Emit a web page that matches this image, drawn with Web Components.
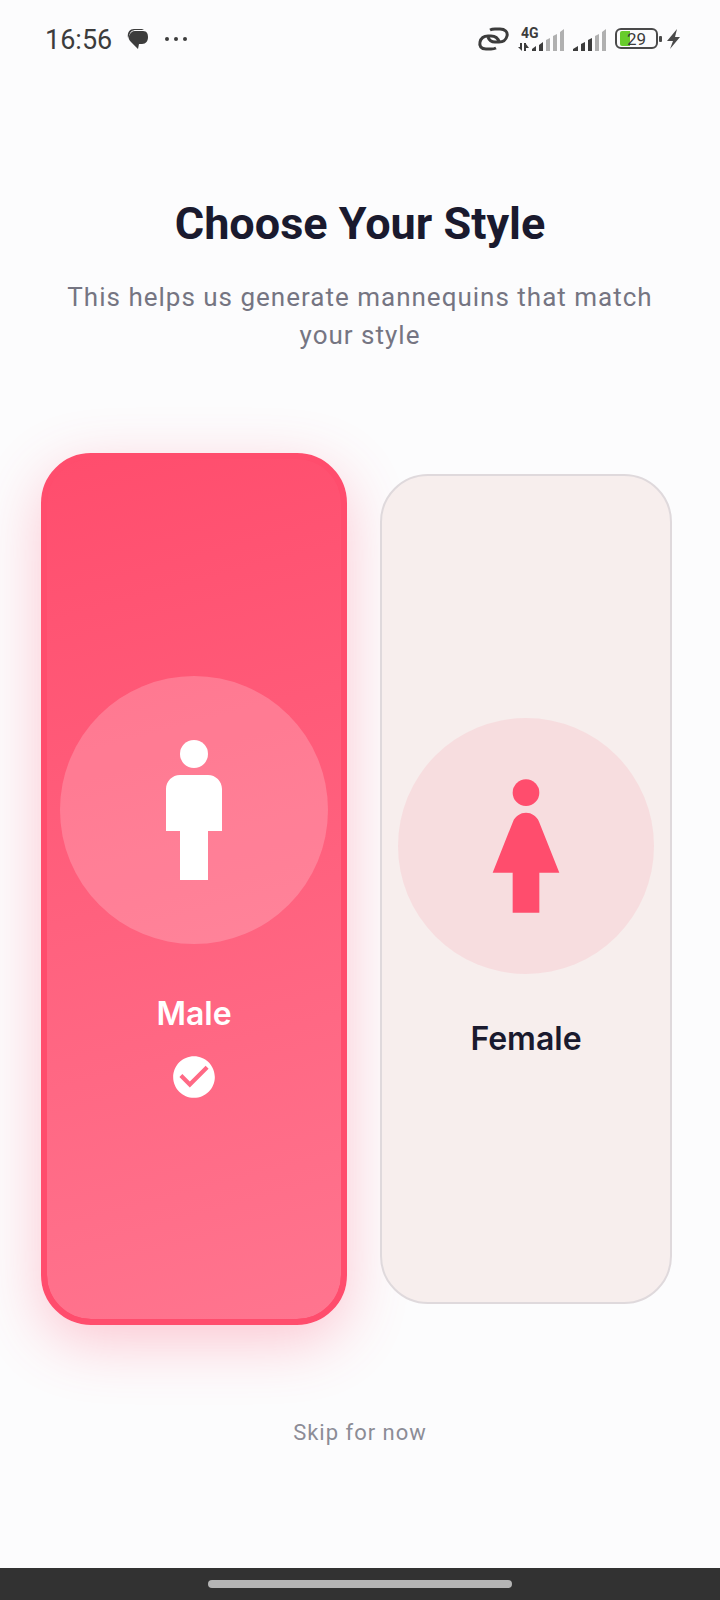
<!DOCTYPE html>
<html lang="en">
<head>
<meta charset="utf-8">
<meta name="viewport" content="width=device-width, initial-scale=1">
<title>Choose Your Style</title>
<style>
  html, body { margin: 0; }
  body { background: #fcfcfd; font-family: Roboto, sans-serif; color: #1a1a2e; }
</style>
</head>
<body>
<style-screen></style-screen>

<template id="t-status">
  <style>
    :host { display: flex; align-items: center; justify-content: space-between; height: 80px; padding: 0 38px 2px 45px; box-sizing: border-box; color: #3c3c3c; }
    div { display: flex; align-items: center; }
    svg { display: block; }
    .time { font-size: 27px; line-height: 34px; padding-top: 2px; }
    .left { gap: 15px; }
    .right { gap: 8px; }
    .power { gap: 3px; }
    .battery { position: relative; }
    .level { position: absolute; inset: 0 5px 0 0; text-align: center; font-size: 17px; line-height: 22px; }
  </style>
  <div class="left">
    <span class="time">16:56</span>
    <svg width="22" height="22" viewBox="0 0 22 22" fill="#3c3c3c" aria-hidden="true">
      <path d="M7 1h8l2 1H9C5 2 3 4 2 8L1 10C0 4 3 1 7 1z"/>
      <path d="M8 3h8c4 0 5 3 5 6 0 4-2 7-6 7h-3l-1 5-7-7C2 12 1 10 2 8 3 5 5 3 8 3z"/>
    </svg>
    <svg width="24" height="6" viewBox="0 0 24 6" fill="#3c3c3c" aria-hidden="true"><circle cx="3" cy="3" r="2"/><circle cx="12" cy="3" r="2"/><circle cx="21" cy="3" r="2"/></svg>
  </div>
  <div class="right">
    <svg width="32" height="26" viewBox="0 0 32 26" fill="none" stroke="#3c3c3c" stroke-width="3" aria-hidden="true">
      <path d="M19 22c-2 1-3 1-5 1H9c-5 0-7-3-6-7 1-4 4-6 8-6h3c4 0 7 2 8 6"/>
      <path d="M13 4c2-1 3-1 5-1h5c5 0 8 3 7 7-1 4-4 6-8 6h-4c-4 0-6-2-7-5"/>
    </svg>
    <svg width="48" height="26" viewBox="0 0 48 26" aria-hidden="true">
      <g fill="#3c3c3c"><path d="M3 17h2v8L1 21h2zM7 17h2v8H7zM9 18l3 4H9z"/><path d="M15 25v-2l4-3v5zM22 25v-6l4-3v9z"/></g>
      <g fill="#b0b0b0"><path d="M29 25V14l4-2v13zM36 25V10l4-2v17zM43 25V6l4-3v22z"/></g>
      <text x="4" y="12" font-family="Roboto" font-size="14" font-weight="700" fill="#3c3c3c">4G</text>
    </svg>
    <svg width="34" height="26" viewBox="0 0 34 26" aria-hidden="true">
      <g fill="#3c3c3c"><path d="M0 25v-2l5-3v5zM8 25v-7l4-2v9zM15 25V14l4-2v13z"/></g>
      <g fill="#b0b0b0"><path d="M22 25V10l4-2v17zM29 25V6l4-3v22z"/></g>
    </svg>
    <div class="power">
      <div class="battery">
        <svg width="48" height="22" viewBox="0 0 48 22" aria-hidden="true">
          <rect x="1" y="1" width="41" height="19" rx="5" fill="none" stroke="#4a4a4a" stroke-width="2"/>
          <path d="M7 3h8v15H7a2 2 0 0 1-2-2V5a2 2 0 0 1 2-2z" fill="#67cc2b"/>
          <rect x="44" y="8" width="3" height="6" rx="1" fill="#4a4a4a"/>
        </svg>
        <span class="level">29</span>
      </div>
      <svg width="16" height="22" viewBox="0 0 16 22" fill="#4a4a4a" aria-hidden="true"><path d="M11 1 1 13h6l-3 8L14 9H9z"/></svg>
    </div>
  </div>
</template>

<template id="t-card">
  <style>
    :host { display: flex; min-width: 0; }
    label {
      flex: 1; display: flex; flex-direction: column; align-items: center; justify-content: center;
      box-sizing: border-box; padding: 0 16px; border: 2px solid #dfd9dc; border-radius: 48px;
      background: rgba(246, 237, 236, .93); color: #1a1a2e; cursor: pointer; position: relative;
    }
    input { position: absolute; inset: 0; margin: 0; opacity: 0; cursor: pointer; }
    .disc { width: 100%; aspect-ratio: 1; border-radius: 50%; background: rgba(255, 77, 109, .1); color: #ff4d6d; display: grid; place-items: center; }
    ::slotted(svg) { display: block; width: 160px; height: 160px; fill: currentColor; }
    .name { margin-top: 44px; font: 600 32px/42px Inter, sans-serif; }
    .check { display: none; margin-top: 16px; width: 50px; height: 50px; fill: #fff; }
    :host([selected]) { margin: -21px -7px; }
    :host([selected]) label {
      padding: 0 13px; border: 6px solid #ff4d6d; border-radius: 50px; color: #fff;
      background: linear-gradient(165deg, #ff4d6d, #ff758f) padding-box, linear-gradient(#ff4d6d, #ff4d6d) border-box;
      box-shadow: 0 17px 60px rgba(255, 77, 109, .3);
    }
    :host([selected]) .disc { background: rgba(255, 255, 255, .2); color: #fff; }
    :host([selected]) ::slotted(svg) { width: 168px; height: 168px; }
    :host([selected]) .name { margin-top: 47px; line-height: 45px; }
    :host([selected]) .check { display: block; }
  </style>
  <label>
    <input type="radio">
    <span class="disc"><slot></slot></span>
    <span class="name"><slot name="label"></slot></span>
    <svg class="check" viewBox="0 0 24 24" aria-hidden="true"><path d="M12 2C6.480 2 2 6.480 2 12s4.480 10 10 10 10-4.480 10-10S17.520 2 12 2zm-2 15l-5-5 1.410-1.410L10 14.170l7.590-7.590L19 8l-9 9z"/></svg>
  </label>
</template>

<template id="t-nav">
  <style>
    :host { display: flex; justify-content: center; height: 32px; padding-top: 12px; box-sizing: border-box; background: #323232; }
    span { width: 304px; height: 8px; border-radius: 4px; background: #b5b5b5; }
  </style>
  <span></span>
</template>

<template id="t-screen">
  <style>
    :host { display: flex; flex-direction: column; min-height: 100vh; }
    main { flex: 1; display: flex; flex-direction: column; align-items: center; padding: 116px 48px 115px; }
    h1 { margin: 0; font-size: 45px; line-height: 56px; font-weight: 700; text-align: center; }
    p { margin: 26px 0 0; font-size: 26px; line-height: 38px; letter-spacing: 1px; color: #757582; text-align: center; }
    .cards { flex: 1; align-self: stretch; display: grid; grid-template-columns: 1fr 1fr; gap: 40px; margin: 120px 0 109px; }
    button { border: 0; padding: 0 8px; background: none; font: 400 22px/40px Roboto, sans-serif; letter-spacing: 1px; color: #8c8c96; cursor: pointer; }
  </style>
  <status-bar></status-bar>
  <main>
    <h1>Choose Your Style</h1>
    <p>This helps us generate mannequins that match your style</p>
    <div class="cards" role="radiogroup" aria-label="Style">
      <gender-card selected>
        <svg viewBox="0 0 24 24" aria-hidden="true"><circle cx="12" cy="4" r="2"/><path d="M14 7h-4c-1.100 0-2 .9-2 2v6h2v7h4v-7h2V9c0-1.100-.9-2-2-2z"/></svg>
        <span slot="label">Male</span>
      </gender-card>
      <gender-card>
        <svg viewBox="0 0 24 24" aria-hidden="true"><circle cx="12" cy="4" r="2"/><path d="M13.940 8.310C13.620 7.520 12.850 7 12 7s-1.620.52-1.940 1.310L7 16h3v6h4v-6h3z"/></svg>
        <span slot="label">Female</span>
      </gender-card>
    </div>
    <button type="button">Skip for now</button>
  </main>
  <nav-handle></nav-handle>
</template>

<script>
  class TemplateElement extends HTMLElement {
    constructor() {
      super();
      const source = document.getElementById(this.constructor.template);
      this.attachShadow({ mode: "open" }).append(source.content.cloneNode(true));
    }
  }

  class StatusBar extends TemplateElement { static template = "t-status"; }
  class NavHandle extends TemplateElement { static template = "t-nav"; }

  class GenderCard extends TemplateElement {
    static template = "t-card";
    static observedAttributes = ["selected"];
    connectedCallback() {
      this.sync();
      this.shadowRoot.querySelector("input").addEventListener("change", () => {
        for (const card of this.parentElement.children) card.toggleAttribute("selected", card === this);
      });
    }
    attributeChangedCallback() { this.sync(); }
    sync() { this.shadowRoot.querySelector("input").checked = this.hasAttribute("selected"); }
  }

  class StyleScreen extends TemplateElement { static template = "t-screen"; }

  customElements.define("status-bar", StatusBar);
  customElements.define("nav-handle", NavHandle);
  customElements.define("gender-card", GenderCard);
  customElements.define("style-screen", StyleScreen);
</script>
</body>
</html>
